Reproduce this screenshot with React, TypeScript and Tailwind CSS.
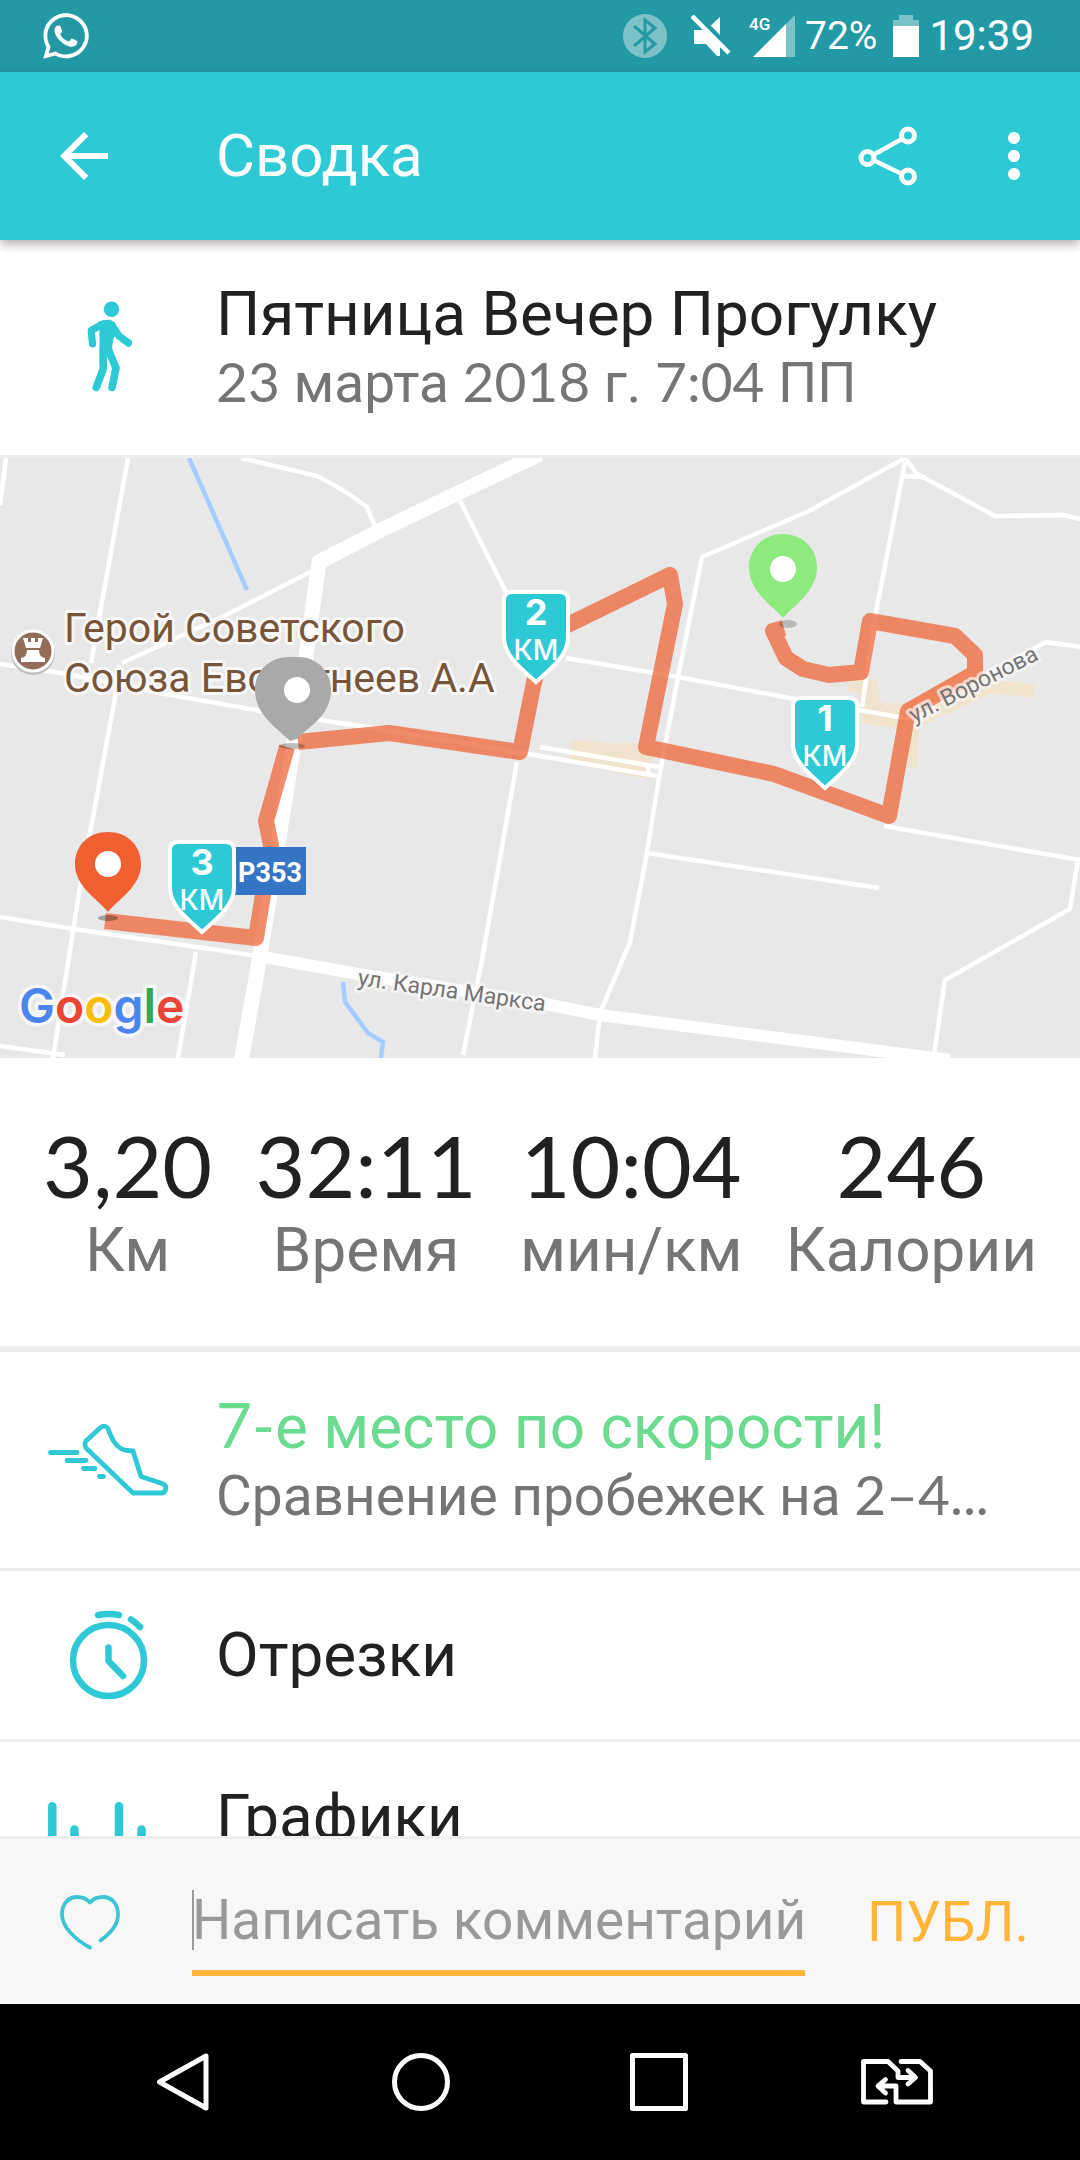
import { useState } from 'react';
import type { ReactNode } from 'react';
import { MdArrowBack, MdMoreVert } from 'react-icons/md';
import { FaWhatsapp } from 'react-icons/fa';

interface Stat {
  value: string;
  label: string;
}

interface KmMarker {
  km: number;
  x: number;
  y: number;
}

const stats: Stat[] = [
  { value: '3,20', label: 'Км' },
  { value: '32:11', label: 'Время' },
  { value: '10:04', label: 'мин/км' },
  { value: '246', label: 'Калории' },
];

const kmMarkers: KmMarker[] = [
  { km: 1, x: 825, y: 238 },
  { km: 2, x: 536, y: 132 },
  { km: 3, x: 202, y: 382 },
];

const minorRoads = [
  'M6 0 L0 47',
  'M128 0 L91 205',
  'M0 206 L62 215 L165 236 L262 253 L379 271 L540 298 L657 318',
  'M119 207 L114 245 L79 435 L53 600',
  'M122 205 L224 158 L312 113',
  'M241 0 L317 18 Q345 32 367 49 L376 71',
  'M460 43 L506 134',
  'M0 459 L74 471 L258 498',
  'M196 494 L178 600',
  'M0 588 L65 597',
  'M517 304 L482 502 L463 597',
  'M905 0 L809 53 L702 99 L678 219 L659 320 L647 395 L630 484 L600 555 L595 600',
  'M540 289 L659 309',
  'M648 309 V318',
  'M566 200 L678 219 L795 241 L905 260',
  'M905 4 L876 154 L862 249',
  'M905 0 L917 16 L995 58 L1063 57 L1080 61',
  'M902 18 L926 19',
  'M905 262 L1046 184 L1080 189',
  'M884 368 L1080 402',
  'M647 395 L879 430',
  'M1078 402 L1070 451 L945 522 L934 597',
];

// Numbers are set in a different face than the text around them
function Num({ children }: { children: ReactNode }) {
  return <span className="font-['Lato',sans-serif] leading-none">{children}</span>;
}

function StatusBar() {
  return (
    <div className="flex h-[72px] shrink-0 items-center bg-[#2499a6] pl-10 pr-[46px] text-white">
      <FaWhatsapp className="size-[52px]" />
      <div className="ml-auto flex items-center">
        <svg viewBox="0 0 44 44" className="mr-6 size-11" aria-hidden="true">
          <circle cx="22" cy="22" r="22" fill="#7cc2c9" />
          <path d="M11 12 L32 30 L22 38 V6 L32 14 L11 32" fill="none" stroke="#2499a6" strokeWidth="3" />
        </svg>
        <svg viewBox="0 0 40 42" className="mr-[18px] h-[42px] w-10" aria-hidden="true">
          <path d="M3 15 H15 L29 2 V41 H26 L15 29 H3z" fill="#fff" />
          <path d="M4 -2 L42 37" stroke="#2499a6" strokeWidth="5" />
          <path d="M1 1 L38 38" stroke="#fff" strokeWidth="4.5" />
        </svg>
        <svg viewBox="0 0 48 44" className="mr-2 h-11 w-12 overflow-visible" aria-label="4G">
          <path d="M4 43 L46 1 V43z" fill="#7cc2c9" />
          <path d="M4 43 L37 10 V43z" fill="#fff" />
          <text x="0" y="16" fontSize="17" fontWeight="500" fill="#fff">4G</text>
        </svg>
        <span className="text-[39px] leading-[48px]">72%</span>
        <svg viewBox="0 0 26 42" className="ml-4 mr-2.5 h-[42px] w-[26px]" aria-hidden="true">
          <path d="M6 0 H20 V5 H26 V12 H0 V5 H6z" fill="#7cc2c9" />
          <path d="M0 11 H26 V42 H0z" fill="#fff" />
        </svg>
        <span className="text-[42px] leading-[50px]">19:39</span>
      </div>
    </div>
  );
}

function AppBar() {
  return (
    <header className="z-10 flex h-[168px] shrink-0 items-center bg-[#2dcad6] pl-12 pr-[30px] text-white shadow-[0_4px_10px_rgba(60,40,50,0.4)]">
      <button type="button" aria-label="Назад" className="w-[168px]">
        <MdArrowBack className="size-[72px]" />
      </button>
      <h1 className="flex-1 text-[60px] leading-[72px]">Сводка</h1>
      <button type="button" aria-label="Поделиться" className="mr-[60px]">
        <svg viewBox="0 0 60 60" className="size-[60px]" fill="none" stroke="currentColor" strokeWidth="4.5">
          <circle cx="50" cy="9.500" r="6.500" strokeWidth="5" />
          <circle cx="50" cy="50.500" r="6.500" strokeWidth="5" />
          <circle cx="9.500" cy="32" r="6.500" strokeWidth="5" />
          <path d="M15 29 L44 13 M15 34 L44 48" />
        </svg>
      </button>
      <button type="button" aria-label="Ещё">
        <MdMoreVert className="size-[72px]" />
      </button>
    </header>
  );
}

function WalkIcon() {
  return (
    <svg viewBox="0 0 48 96" className="h-24 w-12" fill="none" stroke="#2dcad6" strokeLinecap="round" strokeLinejoin="round" aria-hidden="true">
      <circle cx="27.500" cy="10.300" r="7.700" fill="#2dcad6" stroke="none" />
      <path d="M14 23 Q19 20.500 26 20.800 Q30 22 33 29 L35 35 L30 38 L28 48 L32 66 L24 56 L15.500 64 V32z" fill="#2dcad6" stroke="none" />
      <path d="M18 25.500 L7.200 31.500 L8.500 45" strokeWidth="7.200" />
      <path d="M28 26 L35 37 L44.500 44" strokeWidth="7.200" />
      <path d="M19.500 50 L19.200 70 L12.200 88.500" strokeWidth="7.600" />
      <path d="M24 50 L32 69 L28 88.500" strokeWidth="7.600" />
    </svg>
  );
}

function ShoeIcon() {
  return (
    <svg viewBox="0 0 120 74" className="h-[74px] w-[120px]" fill="none" stroke="#2fc8d6" strokeWidth="4.800" strokeLinecap="round" strokeLinejoin="round" aria-hidden="true">
      <path d="M52 5 Q57 1 60 5.500 C64 17 69 27 80 27.500 L85 28 L93 53.500 L114 60.500 Q118 62 118 65 Q117 70 113 70 H85 L38 25 Q36 21 38 18z" />
      <path d="M2.500 29.500 H29 M19 37.500 H38 M35.500 45.500 H47 M51.500 53.500 H55.500" />
    </svg>
  );
}

function StopwatchIcon() {
  return (
    <svg viewBox="0 0 79 90" className="h-[90px] w-[79px]" fill="none" stroke="#2fc8d6" strokeWidth="6.500" strokeLinecap="round" strokeLinejoin="round" aria-hidden="true">
      <circle cx="39.500" cy="50.500" r="35.500" />
      <path d="M29 5 Q39.500 3 50 5 M62 9.500 Q67 12.500 71 17" />
      <path d="M39.500 37.500 V51 L54 66" />
    </svg>
  );
}

function ChartIcon() {
  return (
    <svg viewBox="0 0 120 96" className="h-24 w-[120px]" stroke="#2fc8d6" strokeWidth="8.500" strokeLinecap="round" aria-hidden="true">
      <path d="M4.300 4.300 V92 M26.500 27.500 V92 M49 46 V92 M71 4.300 V92 M93.500 27.500 V92 M115.500 60 V92" />
    </svg>
  );
}

interface RowProps {
  icon: ReactNode;
  title: ReactNode;
  titleClass?: string;
  subtitle?: ReactNode;
  tall?: boolean;
}

function Row({ icon, title, titleClass = 'text-[#212121]', subtitle, tall = false }: RowProps) {
  return (
    <div className="flex items-center">
      <div className="flex w-[216px] shrink-0 justify-center">{icon}</div>
      <div className={`min-w-0 flex-1 pr-12 ${tall ? 'min-h-[138px]' : ''}`}>
        <p className={`text-[62px] leading-[72px] ${titleClass}`}>{title}</p>
        {subtitle && <p className="text-[55px] leading-[66px] text-[#757575]">{subtitle}</p>}
      </div>
    </div>
  );
}

function Shield({ km, x, y }: KmMarker) {
  return (
    <g transform={`translate(${x} ${y})`}>
      <path
        d="M-24 2 H24 Q32 2 32 10 V48 C32 64 18 76 0 92 C-18 76 -32 64 -32 48 V10 Q-32 2 -24 2z"
        fill="#2dcad6"
        stroke="#fff"
        strokeWidth="4"
      />
      <text x="0" y="35" textAnchor="middle" fontSize="36" fontWeight="700" fill="#fff" className="font-['Inter',sans-serif]">{km}</text>
      <text x="0" y="70" textAnchor="middle" fontSize="28" fontWeight="500" fill="#fff" className="font-['Inter',sans-serif]">КМ</text>
    </g>
  );
}

function RouteMap() {
  return (
    <svg viewBox="0 0 1080 600" className="block w-full bg-[#e8e8e8]" role="img" aria-label="Карта маршрута">
      <g fill="#f0e3cd">
        <path d="M571 281 L609 285 L638 285 L654 300 L647 321 L570 304z" />
        <path d="M846 221 H877 L881 245 H907 L981 202 L988 221 L1035 227 V240 L991 235 L919 269 L917 310 H908 L905 271 L862 265 L858 234 H848z" />
      </g>
      <g fill="none" stroke="#a5cdff" strokeWidth="4.500">
        <path d="M189 0 L247 132" />
        <path d="M343 524 L345 544 L368 575 L383 584 L381 600" />
      </g>
      <g fill="none" stroke="#fff" strokeLinejoin="round">
        {minorRoads.map((d) => (
          <path key={d} d={d} strokeWidth="4.500" />
        ))}
        <path d="M540 -4 L460 34 L377 74 L319 104 L306 198 L293 292 L260 498 L241 604" strokeWidth="15" />
        <path d="M258 498 L358 516 L540 545 L600 557 L950 602" strokeWidth="12" />
      </g>

      <g fill="#77553a" fontSize="41" stroke="#f7f7f7" strokeWidth="6" strokeLinejoin="round" paintOrder="stroke">
        <text x="64" y="184">Герой Советского</text>
        <text x="64" y="234">Союза Евстигнеев А.А</text>
      </g>
      <circle cx="33" cy="195" r="22" fill="#bdbdbd" />
      <circle cx="33" cy="193" r="20" fill="#926e58" stroke="#fff" strokeWidth="3" />
      <path d="M23 180 H28 V184 H31 V180 H35 V184 H38 V180 H43 L40 190 H26z M27 192 H39 Q39 199 45 200 V204 H21 V200 Q27 199 27 192z" fill="#fff" />

      <g fill="none" stroke="#ee6638" strokeOpacity="0.750" strokeWidth="16" strokeLinejoin="round">
        <path d="M784 170 L773 173 L786 200 L803 211 L829 217 L861 214 L870 163 L955 178 L975 197 V215 L908 253 L889 358 L774 316 L646 289 L675 146 L670 117 L545 178 L533 229 L520 294 L389 275 L298 284" />
        <path d="M287 289 L266 363 L271 387 L256 480 L105 463" />
      </g>

      <g fill="#757575" fontSize="23" stroke="#f7f7f7" strokeOpacity="0.700" strokeWidth="6" strokeLinejoin="round" paintOrder="stroke">
        <text transform="translate(357 527) rotate(8)">ул. Карла Маркса</text>
        <text transform="translate(914 265) rotate(-27)">ул. Воронова</text>
      </g>

      <rect x="232" y="389" width="74" height="48" fill="#3674c6" />
      <text x="238" y="424" fontSize="27" fontWeight="700" fill="#fff">P353</text>

      <ellipse cx="788" cy="166" rx="9" ry="4" fill="#000" fillOpacity="0.200" />
      <path d="M783 160 C773 148 749 134 749 109 C749 90 764 76 783 76 C802 76 817 90 817 109 C817 134 793 148 783 160z" fill="#8ee97f" />
      <circle cx="783" cy="111" r="13" fill="#fff" />

      <ellipse cx="292" cy="288" rx="13" ry="3" fill="#000" fillOpacity="0.250" />
      <path d="M290 283 C280 272 255 258 255 232 C255 212 270 199 290 199 H298 C316 199 331 212 331 232 C331 258 307 270 297 281z" fill="#a9a9a9" />
      <circle cx="297" cy="232" r="13" fill="#fff" />

      <ellipse cx="108" cy="460" rx="10" ry="3" fill="#000" fillOpacity="0.300" />
      <path d="M108 454 C98 441 75 429 75 406 C75 387 89 374 108 374 C127 374 141 387 141 406 C141 429 118 441 108 454z" fill="#f06030" />
      <circle cx="108" cy="406" r="13" fill="#fff" />

      {kmMarkers.map((marker) => (
        <Shield key={marker.km} {...marker} />
      ))}

      <text x="19" y="565" fontSize="48" fontWeight="600" stroke="#f7f7f7" strokeWidth="7" strokeLinejoin="round" paintOrder="stroke" className="font-['Inter',sans-serif]">
        <tspan fill="#4a86ee">G</tspan>
        <tspan fill="#e94436">o</tspan>
        <tspan fill="#fbbc05">o</tspan>
        <tspan fill="#4a86ee">g</tspan>
        <tspan fill="#36a852">l</tspan>
        <tspan fill="#e94436">e</tspan>
      </text>
    </svg>
  );
}

function CommentBar() {
  const [comment, setComment] = useState('');

  return (
    <form
      onSubmit={(e) => e.preventDefault()}
      className="flex shrink-0 items-center border-t-3 border-[#eeeeee] bg-[#f7f7f7] pb-7 pl-[60px] pr-[51px] pt-[29px]"
    >
      <button type="button" aria-label="Нравится" className="mr-[72px]">
        <svg viewBox="0 0 60 56" className="h-14 w-[60px]" fill="none" stroke="#3cc5d3" strokeWidth="3.800" strokeLinecap="round" strokeLinejoin="round">
          <path d="M30 53.500 C14 45 2 32 2 20.500 C2 9 9 3 17 3 C22 3 27 5 30 8.500 C33 5 38 3 43 3 C51 3 58 9 58 20.500 C58 30 51 39 40.500 46.500" />
        </svg>
      </button>
      <div className="relative min-w-0 flex-1">
        {!comment && <span className="absolute left-0 top-[22px] h-[60px] w-0.5 bg-[#999999]" />}
        <input
          type="text"
          aria-label="Комментарий"
          placeholder="Написать комментарий"
          value={comment}
          onChange={(e) => setComment(e.target.value)}
          className="block h-[108px] w-full border-b-6 border-[#ffb53a] bg-transparent pt-0.5 text-[55px] text-[#212121] outline-none placeholder:text-[#999999]"
        />
      </div>
      <button type="submit" className="ml-[62px] text-[55px] leading-[72px] text-[#ffb53a]">ПУБЛ.</button>
    </form>
  );
}

function NavBar() {
  return (
    <nav className="flex h-[156px] shrink-0 items-center bg-black px-16 text-white">
      <button type="button" aria-label="Назад" className="flex flex-1 justify-center">
        <svg viewBox="0 0 60 60" className="size-[60px]" fill="none" stroke="currentColor" strokeWidth="5" strokeLinejoin="round">
          <path d="M6.500 30 L53 4 V56z" />
        </svg>
      </button>
      <button type="button" aria-label="Домой" className="flex flex-1 justify-center">
        <svg viewBox="0 0 60 60" className="size-[60px]" fill="none" stroke="currentColor" strokeWidth="5">
          <circle cx="30" cy="30" r="26.500" />
        </svg>
      </button>
      <button type="button" aria-label="Недавние" className="flex flex-1 justify-center">
        <svg viewBox="0 0 60 60" className="size-[60px]" fill="none" stroke="currentColor" strokeWidth="5" strokeLinejoin="round">
          <path d="M3.500 3.500 H56.500 V56.500 H3.500z" />
        </svg>
      </button>
      <button type="button" aria-label="Сменить SIM-карту" className="flex flex-1 justify-center">
        <svg viewBox="0 0 72 46" className="h-[46px] w-[72px]" fill="none" stroke="currentColor" strokeWidth="4.800" strokeLinecap="round" strokeLinejoin="round">
          <path d="M25 43 H2.500 V2.500 H27 L37 12 V18.500 H54 M47 11.500 L54.500 18.500 L47 25" />
          <path d="M40 2.500 H59 L69.500 12 V43 H35 V27 H18 M24.500 20.500 L17 27 L24.500 34" />
        </svg>
      </button>
    </nav>
  );
}

export default function App() {
  return (
    <div className="flex h-screen flex-col overflow-hidden bg-white font-['Roboto',sans-serif]">
      <StatusBar />
      <AppBar />

      <main className="min-h-0 flex-1 overflow-y-auto [scrollbar-width:none]">
        <section className="border-b-3 border-[#eeeeee] pb-[39px] pt-[38px]">
          <Row
            icon={<WalkIcon />}
            title="Пятница Вечер Прогулку"
            subtitle={<><Num>23</Num> марта <Num>2018</Num> г. <Num>7:04</Num> ПП</>}
          />
        </section>

        <RouteMap />

        {/* Run totals */}
        <dl className="flex justify-between border-b-6 border-[#eeeeee] px-[43px] pb-[60px] pt-[58px]">
          {stats.map((stat) => (
            <div key={stat.label} className="flex flex-col-reverse items-center">
              <dt className="text-[62px] leading-[72px] text-[#757575]">{stat.label}</dt>
              <dd className="font-['Lato',sans-serif] text-[86px] leading-[98px] text-[#212121]">{stat.value}</dd>
            </div>
          ))}
        </dl>

        <section className="divide-y-3 divide-[#eeeeee]">
          <div className="py-[39px]">
            <Row
              icon={<ShoeIcon />}
              title={<><Num>7-</Num>е место по скорости!</>}
              titleClass="text-[#6bdb8f]"
              subtitle={<>Сравнение пробежек на <Num>2–4...</Num></>}
            />
          </div>
          <div className="py-[39px]">
            <Row icon={<StopwatchIcon />} title="Отрезки" />
          </div>
          <div className="py-[39px]">
            <Row icon={<ChartIcon />} title="Графики" tall />
          </div>
        </section>
      </main>

      <CommentBar />
      <NavBar />
    </div>
  );
}
